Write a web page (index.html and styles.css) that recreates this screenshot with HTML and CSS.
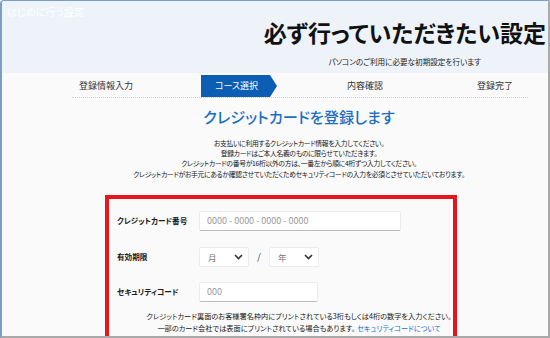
FILE: index.html
```html
<!DOCTYPE html>
<html lang="ja">
<head>
<meta charset="utf-8">
<link rel="stylesheet" href="styles.css">
</head>
<body>
<div class="window">
  <header class="header">
    <div class="app-title">はじめに行う設定</div>
    <div class="title-block">
      <h1 class="title">必ず行っていただきたい設定</h1>
      <p class="subtitle">パソコンのご利用に必要な初期設定を行います</p>
    </div>
  </header>
  <main class="main">
    <nav class="steps">
      <div class="step step-1">登録情報入力</div>
      <div class="step step-active">コース選択</div>
      <div class="step step-3">内容確認</div>
      <div class="step step-4">登録完了</div>
    </nav>
    <h2 class="heading">クレジットカードを登録します</h2>
    <p class="intro">お支払いに利用するクレジットカード情報を入力してください。<br>登録カードはご本人名義のものに限らせていただきます。<br>クレジットカードの番号が16桁以外の方は、一番左から順に4桁ずつ入力してください。<br>クレジットカードがお手元にあるか確認させていただくためセキュリティコードの入力を必須とさせていただいております。</p>
    <section class="form-box">
      <div class="row row-1">
        <div class="label">クレジットカード番号</div>
        <div class="field field-card">0000 - 0000 - 0000 - 0000</div>
      </div>
      <div class="row row-2">
        <div class="label">有効期限</div>
        <div class="select"><span>月</span><svg class="chev" width="9" height="6" viewBox="0 0 9 6"><path d="M1 1 L4.5 4.5 L8 1" fill="none" stroke="#333" stroke-width="1.6"/></svg></div>
        <div class="slash">/</div>
        <div class="select"><span>年</span><svg class="chev" width="9" height="6" viewBox="0 0 9 6"><path d="M1 1 L4.5 4.5 L8 1" fill="none" stroke="#333" stroke-width="1.6"/></svg></div>
      </div>
      <div class="row row-3">
        <div class="label">セキュリティコード</div>
        <div class="field field-cvc">000</div>
      </div>
      <p class="note">クレジットカード裏面のお客様署名枠内にプリントされている3桁もしくは4桁の数字を入力ください。<br>一部のカード会社では表面にプリントされている場合もあります。 <a class="link" href="#">セキュリティコードについて</a></p>
    </section>
  </main>
</div>
</body>
</html>
```

FILE: styles.css
```css
* { box-sizing: border-box; }
html, body { margin: 0; padding: 0; }
body {
  font-family: "Noto Sans CJK JP", "Noto Sans", sans-serif;
  font-feature-settings: "palt";
  color: #222;
  background: #fff;
}
.window {
  width: 550px;
  height: 338px;
  border-left: 2px solid #7b9ec6;
  border-top: 1px solid #7b9ec6;
  border-right: 2px solid #a9a9a9;
  border-bottom: 2px solid #a9a9a9;
  border-top-left-radius: 4px;
  background: #fafafa;
  overflow: hidden;
  display: flex;
  flex-direction: column;
}
.header {
  height: 72px;
  background: #edf3f9;
  display: flex;
  flex-direction: column;
  flex-shrink: 0;
}
.app-title {
  color: #fff;
  font-size: 10px;
  line-height: 12px;
  padding: 5px 0 0 5px;
}
.title-block {
  align-self: flex-end;
  text-align: center;
  padding-right: 2px;
}
.title {
  margin: 1px 0 0;
  font-size: 23px;
  line-height: 26px;
  font-weight: 700;
  color: #111;
}
.subtitle {
  margin: 11.5px 0 0;
  font-size: 7.6px;
  line-height: 10px;
  color: #222;
}
.main {
  flex: 1;
  display: flex;
  flex-direction: column;
  padding-left: 48px;
}
.steps {
  margin: 2px 0 0 22px;
  width: 456px;
  height: 23px;
  display: flex;
  align-items: stretch;
  border-bottom: 1px dotted #cfcfcf;
  flex-shrink: 0;
}
.step {
  font-size: 9px;
  line-height: 22px;
  color: #333;
}
.step-1 { width: 129px; padding-left: 7px; }
.step-active {
  width: 76px;
  height: 22px;
  background: #0b5eb4;
  color: #fff;
  padding-left: 14px;
  clip-path: polygon(0 0, 69px 0, 76px 50%, 69px 100%, 0 100%);
}
.step-3 { margin-left: 70px; }
.step-4 { margin-left: 94px; }
.heading {
  margin: 7.5px 0 0;
  text-align: center;
  font-size: 15.2px;
  line-height: 20px;
  font-weight: 500;
  color: #1a6ec4;
}
.intro {
  margin: 12.3px 0 0;
  text-align: center;
  font-size: 6.8px;
  letter-spacing: -0.3px;
  line-height: 10.3px;
  color: #151515;
}
.form-box {
  margin: 16px 0 0 55px;
  width: 352px;
  height: 150px;
  border: 4px solid #e8141c;
  padding: 12px 0 0 8px;
  flex-shrink: 0;
}
.row {
  display: flex;
  align-items: center;
  height: 20px;
}
.row-1 { margin-bottom: 16px; }
.row-2 { margin-bottom: 15px; }
.label {
  width: 82px;
  font-size: 7.6px;
  font-weight: 700;
  color: #1a1a1a;
}
.field {
  height: 20px;
  background: #fff;
  border: 1px solid #ececec;
  border-bottom: 1px solid #bdbdbd;
  border-radius: 2px;
  font-size: 9px;
  line-height: 18px;
  color: #9a9a9a;
  padding-left: 7px;
}
.field-card { width: 202px; }
.field-cvc { width: 119px; }
.select {
  width: 50px;
  height: 20px;
  background: #fff;
  border: 1px solid #ececec;
  border-radius: 2px;
  display: flex;
  align-items: center;
  justify-content: space-between;
  padding: 0 5px 0 8px;
  font-size: 8.5px;
  color: #777;
}
.slash {
  width: 20px;
  text-align: center;
  font-size: 9px;
  color: #333;
}
.note {
  margin: 8px 0 0 28px;
  text-align: center;
  font-size: 7.2px;
  line-height: 12px;
  color: #151515;
}
.link {
  color: #1a6ec4;
  text-decoration: none;
}
```
